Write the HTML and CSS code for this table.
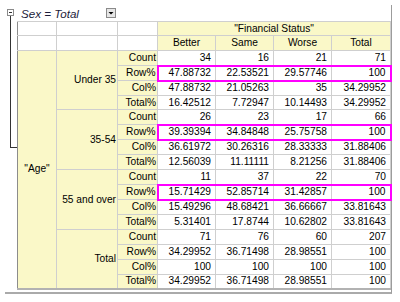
FILE: index.html
```html
<!DOCTYPE html>
<html lang="en">
<head>
  <meta charset="UTF-8">
  <title>Cross Table</title>
  <link rel="stylesheet" href="styles.css">
</head>
<body>
  <div class="panel">
    <!-- tree toggle + connector -->
    <div class="tree">
      <div class="tree-toggle"></div>
      <div class="tree-line"></div>
    </div>

    <div class="sheet">
      <div class="filter-row">
        <span class="filter-label">Sex = Total</span>
        <span class="dropdown">
          <svg width="8" height="8" viewBox="0 0 8 8"><path d="M1.5 3h5L4 5.5z" fill="#000"/></svg>
        </span>
      </div>

      <table class="crosstab">
        <colgroup>
          <col style="width:39px"><col style="width:61px"><col style="width:40px">
          <col style="width:58px"><col style="width:58px"><col style="width:58px"><col style="width:59px">
        </colgroup>
        <tr class="h14">
          <td class="blank edge"></td><td class="blank"></td><td class="blank"></td>
          <td class="head" colspan="4">"Financial Status"</td>
        </tr>
        <tr class="h15">
          <td class="blank edge"></td><td class="blank"></td><td class="blank"></td>
          <td class="head">Better</td><td class="head">Same</td><td class="head">Worse</td><td class="head">Total</td>
        </tr>

        <tr class="h15">
          <td class="head edge" rowspan="16">"Age"</td>
          <td class="group" rowspan="4">Under 35</td>
          <td class="label">Count</td><td>34</td><td>16</td><td>21</td><td>71</td>
        </tr>
        <tr class="h15 hl"><td class="label">Row%</td><td>47.88732</td><td>22.53521</td><td>29.57746</td><td>100</td></tr>
        <tr class="h15"><td class="label">Col%</td><td>47.88732</td><td>21.05263</td><td>35</td><td>34.29952</td></tr>
        <tr class="h14"><td class="label">Total%</td><td>16.42512</td><td>7.72947</td><td>10.14493</td><td>34.29952</td></tr>

        <tr class="h15">
          <td class="group" rowspan="4">35-54</td>
          <td class="label">Count</td><td>26</td><td>23</td><td>17</td><td>66</td>
        </tr>
        <tr class="h15 hl"><td class="label">Row%</td><td>39.39394</td><td>34.84848</td><td>25.75758</td><td>100</td></tr>
        <tr class="h15"><td class="label">Col%</td><td>36.61972</td><td>30.26316</td><td>28.33333</td><td>31.88406</td></tr>
        <tr class="h15"><td class="label">Total%</td><td>12.56039</td><td>11.11111</td><td>8.21256</td><td>31.88406</td></tr>

        <tr class="h15">
          <td class="group" rowspan="4">55 and over</td>
          <td class="label">Count</td><td>11</td><td>37</td><td>22</td><td>70</td>
        </tr>
        <tr class="h15 hl"><td class="label">Row%</td><td>15.71429</td><td>52.85714</td><td>31.42857</td><td>100</td></tr>
        <tr class="h15"><td class="label">Col%</td><td>15.49296</td><td>48.68421</td><td>36.66667</td><td>33.81643</td></tr>
        <tr class="h15"><td class="label">Total%</td><td>5.31401</td><td>17.8744</td><td>10.62802</td><td>33.81643</td></tr>

        <tr class="h15">
          <td class="group" rowspan="4">Total</td>
          <td class="label">Count</td><td>71</td><td>76</td><td>60</td><td>207</td>
        </tr>
        <tr class="h15"><td class="label">Row%</td><td>34.29952</td><td>36.71498</td><td>28.98551</td><td>100</td></tr>
        <tr class="h15"><td class="label">Col%</td><td>100</td><td>100</td><td>100</td><td>100</td></tr>
        <tr class="h14"><td class="label">Total%</td><td>34.29952</td><td>36.71498</td><td>28.98551</td><td>100</td></tr>
      </table>
    </div>
  </div>
</body>
</html>
```

FILE: styles.css
```css
/* Cross table sheet */
body {
  margin: 0;
  background: #fff;
  font-family: "Liberation Sans", Arial, sans-serif;
  color: #000;
}
.panel {
  display: flex;
  margin: 5px 0 0 5px;
  width: 386px;
  height: 287px;
  border-right: 1px solid #9c9c9c;
  border-bottom: 2px solid #aaa;
}
.tree {
  flex: none;
  width: 12px;
}
.tree-toggle {
  box-sizing: border-box;
  width: 7px;
  height: 7px;
  margin: 4px 0 0 2px;
  border: 1px solid #8a8a8a;
  background: linear-gradient(#333, #333) center / 3px 1px no-repeat;
}
.tree-line {
  width: 6px;
  height: 131px;
  margin-left: 5px;
  border-left: 1px solid #333;
  border-bottom: 1px solid #333;
}
.sheet {
  flex: none;
}
.filter-row {
  display: flex;
  align-items: center;
  height: 16px;
}
.filter-label {
  box-sizing: border-box;
  width: 89px;
  padding-left: 4px;
  font-size: 11.6px;
  font-style: italic;
  color: #1c1c3a;
}
.dropdown {
  box-sizing: border-box;
  display: flex;
  align-items: center;
  justify-content: center;
  width: 10px;
  height: 10px;
  border: 1px solid #8a8a8a;
  background: #e6e6e6;
}
.crosstab {
  border-collapse: collapse;
  table-layout: fixed;
  width: 373px;
  font-size: 10.2px;
  border-bottom: 2px solid #b2b2b2;
}
.crosstab td {
  border: 1px solid #cfcfcf;
  padding: 0 4px 0 0;
  text-align: right;
  white-space: nowrap;
  overflow: hidden;
  line-height: 12px;
}
.h14 { height: 14px; }
.h15 { height: 15px; }
.crosstab td.blank { background: #fff; }
.crosstab td.head {
  background: #faf8c8;
  text-align: center;
  padding: 0;
}
.crosstab td.group,
.crosstab td.label {
  background: #faf8c8;
  padding-right: 1px;
}
.crosstab td.edge { border-left-color: #8c8c8c; }
.crosstab tr.hl td:not(.label) {
  border-top: 2px solid #f0f;
  border-bottom: 2px solid #f0f;
}
.crosstab tr.hl td.label + td { border-left: 2px solid #f0f; }
.crosstab tr.hl td:last-child { border-right: 2px solid #f0f; }
```
